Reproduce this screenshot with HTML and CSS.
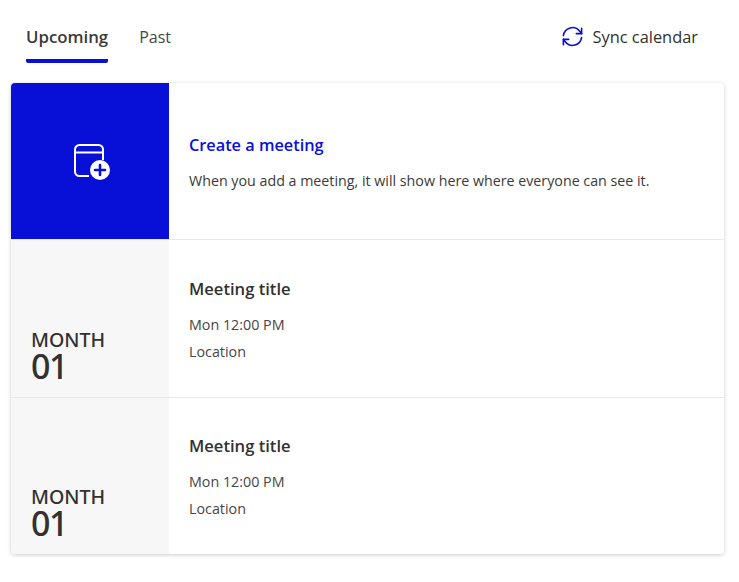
FILE: index.html
```html
<!DOCTYPE html>
<html lang="en">
<head>
<meta charset="utf-8">
<title>Meetings</title>
<link rel="stylesheet" href="styles.css">
</head>
<body>
<div class="app">
  <header class="top">
    <nav class="tabs">
      <div class="tab active">Upcoming</div>
      <div class="tab">Past</div>
    </nav>
    <div class="sync">
      <svg class="sync-icon" viewBox="0 0 24 24" fill="none" stroke="#0810d8" stroke-width="1.7" stroke-linecap="round" stroke-linejoin="round">
        <path d="M2.5 11A9.5 9.5 0 0 1 19.5 6.5L21.5 9"/>
        <path d="M21.5 3.5V9H16"/>
        <path d="M21.5 13A9.5 9.5 0 0 1 4.5 17.5L2.5 15"/>
        <path d="M2.5 20.5V15H8"/>
      </svg>
      <span>Sync calendar</span>
    </div>
  </header>
  <main class="card">
    <section class="row row-create">
      <div class="side side-blue">
        <svg class="add-icon" viewBox="0 0 38 38" fill="none">
          <path d="M16 33H6.5A4.5 4.5 0 0 1 2 28.5V6.5A4.5 4.5 0 0 1 6.5 2H25.5A4.5 4.5 0 0 1 30 6.5V17" stroke="#fff" stroke-width="2"/>
          <path d="M2 9.5H30" stroke="#fff" stroke-width="2"/>
          <circle cx="27" cy="27" r="10" fill="#fff"/>
          <path d="M27 22V32M22 27H32" stroke="#0810d8" stroke-width="2.6" stroke-linecap="round"/>
        </svg>
      </div>
      <div class="body body-create">
        <h2 class="title title-blue">Create a meeting</h2>
        <p class="line line-desc">When you add a meeting, it will show here where everyone can see it.</p>
      </div>
    </section>
    <section class="row">
      <div class="side side-date">
        <div class="month">MONTH</div>
        <div class="day">01</div>
      </div>
      <div class="body">
        <h2 class="title">Meeting title</h2>
        <p class="line line-first">Mon 12:00 PM</p>
        <p class="line">Location</p>
      </div>
    </section>
    <section class="row">
      <div class="side side-date">
        <div class="month">MONTH</div>
        <div class="day">01</div>
      </div>
      <div class="body">
        <h2 class="title">Meeting title</h2>
        <p class="line line-first">Mon 12:00 PM</p>
        <p class="line">Location</p>
      </div>
    </section>
  </main>
</div>
</body>
</html>
```
FILE: styles.css
```css
* { box-sizing: border-box; }
html, body { margin: 0; padding: 0; background: #fff; }
body { font-family: "Open Sans", "Noto Sans", sans-serif; color: #323130; width: 739px; height: 582px; overflow: hidden; }
.app { padding: 0 15px 0 11px; }
.top { height: 83px; display: flex; justify-content: space-between; align-items: flex-start; padding: 0 26px 0 15px; }
.tabs { display: flex; gap: 31px; }
.tab { font-size: 16px; height: 63px; padding-top: 25px; line-height: 24px; color: #484644; }
.tab.active { font-size: 16.8px; font-weight: 600; color: #3b3a39; border-bottom: 4px solid #0810d8; border-bottom-left-radius: 2px; border-bottom-right-radius: 2px; }
.sync { display: flex; align-items: center; gap: 8px; font-size: 16.4px; height: 24px; margin-top: 24px; }
.sync-icon { width: 23px; height: 23px; }
.card { border-radius: 4px; box-shadow: 0 1px 4px rgba(0,0,0,0.2); overflow: hidden; background: #fff; }
.row { display: flex; height: 157.5px; border-top: 1px solid #e8e8e8; }
.row-create { border-top: 0; height: 156px; }
.side { width: 158px; flex: none; }
.side-blue { background: #0810d8; display: flex; align-items: center; justify-content: center; padding: 2px 0 0 4px; }
.add-icon { width: 38px; height: 38px; }
.side-date { background: #f7f7f7; padding: 0 0 15px 20px; display: flex; flex-direction: column; justify-content: flex-end; }
.month { font-family: "Noto Sans", "Open Sans", sans-serif; font-size: 19.6px; line-height: 23px; font-weight: 500; }
.day { font-family: "Noto Sans", "Open Sans", sans-serif; font-size: 34px; line-height: 31px; font-weight: 500; letter-spacing: -1.5px; }
.body { padding: 5px 20px 0; display: flex; flex-direction: column; justify-content: center; flex: 1; }
.body-create { padding-top: 4px; }
.title { margin: 0; font-size: 16.6px; line-height: 24px; font-weight: 600; }
.title-blue { color: #0810d8; font-size: 16.3px; }
.line { margin: 0; font-size: 14.3px; line-height: 27px; color: #484644; }
.line-desc { margin-top: 10px; color: #3b3a39; font-size: 14.25px; }
.line-first { margin-top: 10px; }
```
